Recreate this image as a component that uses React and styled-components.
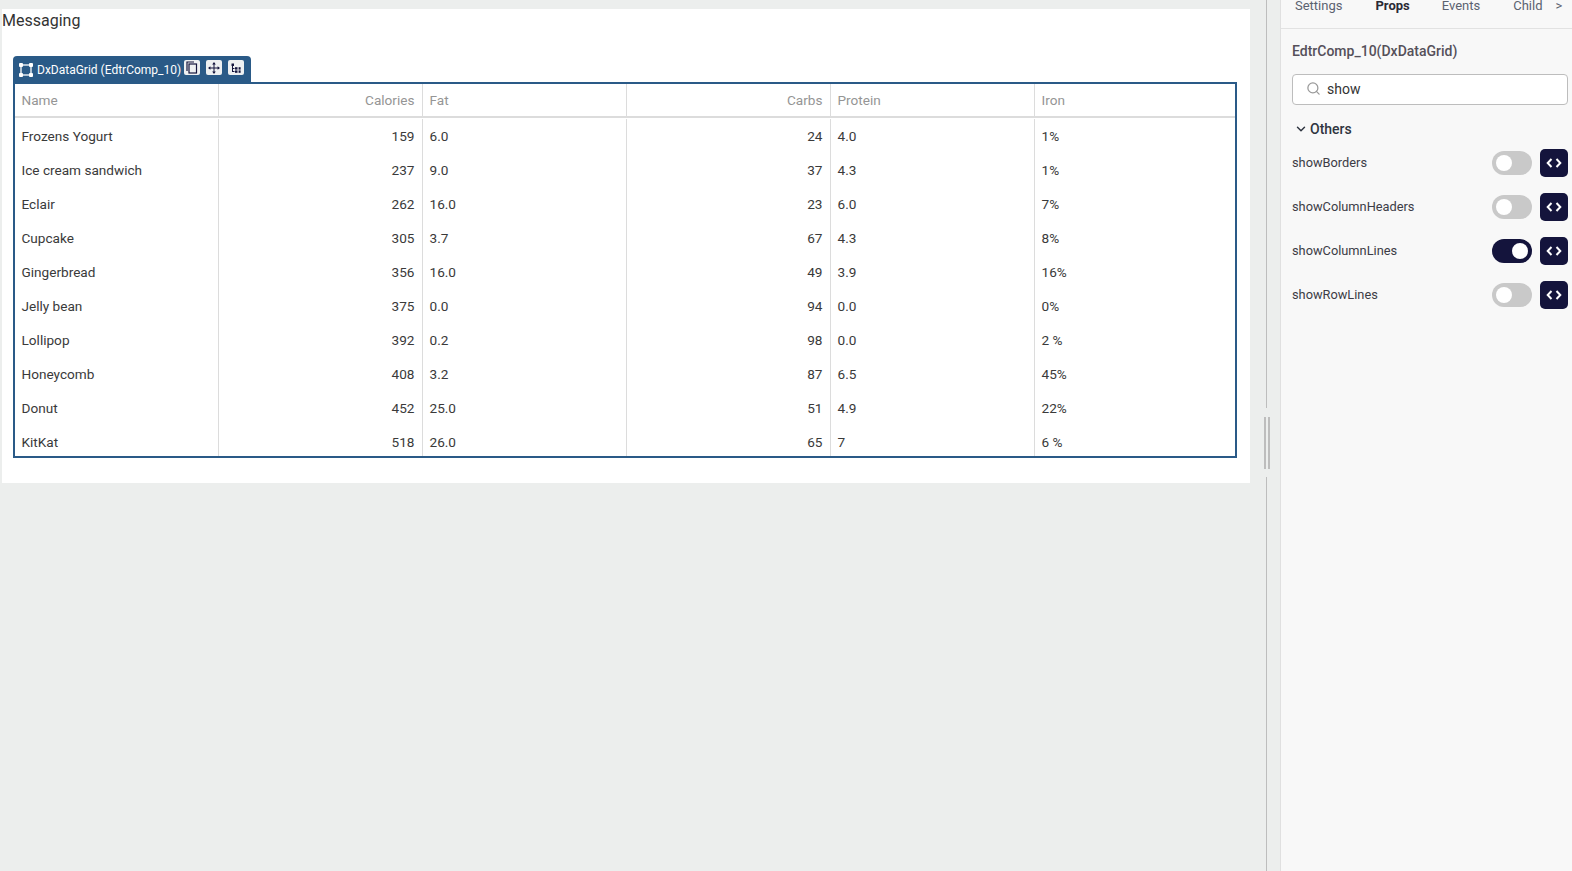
import React from 'react';
import styled, { createGlobalStyle } from 'styled-components';
import { Search, ChevronDown } from 'lucide-react';

const Global = createGlobalStyle`
  html, body { margin: 0; padding: 0; height: 100%; overflow: hidden; }
  body { font-family: Roboto, "Liberation Sans", sans-serif; background: #eceeed; color: #333; }
  * { box-sizing: border-box; }
`;

const Page = styled.div`display: flex; width: 1572px; height: 871px; overflow: hidden; background: #eceeed;`;
const Canvas = styled.main`flex: 0 0 1264px; padding: 9px 14px 0 2px;`;
const Sheet = styled.section`background: #fff; height: 474px; padding: 0 11px 0 0;`;
const Heading = styled.div`font-size: 16px; line-height: 22px; color: #333; padding-top: 1px; height: 47px;`;
const GridFrame = styled.div`margin-left: 11px; position: relative;`;
const GridTab = styled.div`
  display: flex; align-items: center; width: 238px; height: 26px; background: #2a5a87; color: #fff;
  border-radius: 4px 4px 0 0; padding: 2px 0 0 5px; font-size: 12px;
`;
const TabLabel = styled.span`margin-left: 3px; width: 147px; white-space: nowrap;`;
const TabBtn = styled.span`
  width: 16px; height: 15px; background: #eef0f1; border-radius: 2px; margin-right: 6px; display: flex;
  align-items: center; justify-content: center; margin-top: -5px;
`;
const Table = styled.div`
  border: 2px solid #2a5a87; height: 376px; overflow: hidden; width: 1224px;
`;
const Row = styled.div`
  display: grid; grid-template-columns: 204px 204px 204px 204px 204px 200px; height: ${p => p.$h}px;
  border-bottom: ${p => (p.$head ? '2px solid #dcdcdc' : 'none')};
  margin-bottom: ${p => (p.$head ? '1px' : '0')};
`;
const Cell = styled.div`
  font-size: 13.6px; line-height: 20px; padding: 0 7.5px 0 6.5px; display: flex; align-items: center;
  justify-content: ${p => (p.$num ? 'flex-end' : 'flex-start')};
  color: ${p => (p.$head ? '#959595' : '#3a3a3a')};
  border-right: ${p => (p.$last ? 'none' : '1px solid #dcdcdc')};
`;
const Splitter = styled.div`
  flex: 0 0 16px; position: relative;
  background: linear-gradient(#bdbdbd, #bdbdbd) no-repeat 2px 0 / 1px 408px,
    linear-gradient(#bdbdbd, #bdbdbd) no-repeat 2px 477px / 1px 394px;
`;
const Grip = styled.div`
  position: absolute; left: 0; top: 417px; width: 6px; height: 52px;
  border-left: 2px solid #bdbdbd; border-right: 2px solid #bdbdbd;
`;
const Panel = styled.aside`
  flex: 0 0 292px; background: #f8f8f8; border-left: 1px solid #e0e0e0; display: flex; flex-direction: column;
`;
const Tabs = styled.nav`
  height: 29px; border-bottom: 1px solid #e2e2e2; position: relative; flex: none; font-size: 13px; color: #5b6270;
  display: flex; align-items: flex-start; padding-left: 14px; overflow: hidden;
`;
const TabItem = styled.span`
  margin-top: -3px; line-height: 18px; margin-right: ${p => p.$gap}px;
  font-weight: ${p => (p.$active ? 700 : 400)}; color: ${p => (p.$active ? '#2a2a35' : '#5b6270')};
`;
const PanelBody = styled.div`padding: 0 4px 0 11px;`;
const Title = styled.h2`margin: 13px 0 0; font-size: 14px; line-height: 18px; font-weight: 500; color: #55505a;`;
const SearchBox = styled.div`
  margin-top: 14px; height: 31px; border: 1px solid #bdbdbd; border-radius: 4px; background: #fff;
  display: flex; align-items: center; padding: 0 0 2px 13px; color: #333; font-size: 14px; gap: 6px;
  svg { color: #999; }
`;
const Group = styled.div`
  display: flex; align-items: center; margin-top: 14px; height: 20px; font-size: 14px; font-weight: 500; color: #2f3540; padding-left: 2px; gap: 2px;
`;
const PropRow = styled.div`
  display: flex; align-items: center; height: 28px; margin-top: ${p => (p.$first ? 10 : 16)}px; font-size: 12.8px; color: #3c3c46;
`;
const PropName = styled.span`flex: 1; padding-bottom: 2px;`;
const Toggle = styled.span`
  width: 40px; height: 24px; border-radius: 12px; background: ${p => (p.$on ? '#14143c' : '#c9c9c9')};
  display: flex; align-items: center; padding: 0 4px; justify-content: ${p => (p.$on ? 'flex-end' : 'flex-start')};
  &::before { content: ''; width: 16px; height: 16px; border-radius: 50%; background: #fff; }
`;
const CodeBtn = styled.span`
  width: 28px; height: 28px; border-radius: 5px; background: #14143c; margin-left: 8px;
  display: flex; align-items: center; justify-content: center; padding-bottom: 1px;
`;

const rows = [
  ['Frozens Yogurt', '159', '6.0', '24', '4.0', '1%'],
  ['Ice cream sandwich', '237', '9.0', '37', '4.3', '1%'],
  ['Eclair', '262', '16.0', '23', '6.0', '7%'],
  ['Cupcake', '305', '3.7', '67', '4.3', '8%'],
  ['Gingerbread', '356', '16.0', '49', '3.9', '16%'],
  ['Jelly bean', '375', '0.0', '94', '0.0', '0%'],
  ['Lollipop', '392', '0.2', '98', '0.0', '2 %'],
  ['Honeycomb', '408', '3.2', '87', '6.5', '45%'],
  ['Donut', '452', '25.0', '51', '4.9', '22%'],
  ['KitKat', '518', '26.0', '65', '7', '6 %'],
];
const head = ['Name', 'Calories', 'Fat', 'Carbs', 'Protein', 'Iron'];
const numeric = [false, true, false, true, false, false];

const Resize = () => (
  <svg width="16" height="16" viewBox="0 0 16 16" fill="none" stroke="#fff" strokeWidth="1.3">
    <rect x="3" y="3" width="10" height="10" />
    <g fill="#fff" stroke="none">
      <rect x="1" y="1" width="4" height="4" rx="1" /><rect x="11" y="1" width="4" height="4" rx="1" />
      <rect x="1" y="11" width="4" height="4" rx="1" /><rect x="11" y="11" width="4" height="4" rx="1" />
    </g>
  </svg>
);
const CopyIcon = () => (
  <svg width="12" height="13" viewBox="0 0 12 13" fill="none" stroke="#14143c" strokeWidth="1.2">
    <path d="M1 10V1h7" /><rect x="3" y="3" width="7.5" height="9" />
  </svg>
);
const MoveIcon = () => (
  <svg width="12" height="12" viewBox="0 0 12 12" fill="#14143c" stroke="#14143c" strokeWidth="1">
    <path d="M6 1V11M1 6H11" fill="none" />
    <path d="M6 0 4.2 2.4h3.6zM6 12 4.2 9.6h3.6zM0 6 2.4 4.2v3.6zM12 6 9.6 4.2v3.6z" stroke="none" />
  </svg>
);
const TreeIcon = () => (
  <svg width="12" height="12" viewBox="0 0 12 12" fill="#14143c">
    <rect x="1.5" y="1.5" width="2.5" height="2.5" /><rect x="2" y="4" width="1" height="6" />
    <rect x="2" y="6" width="2.5" height="1" /><rect x="2" y="9" width="2.5" height="1" />
    <rect x="5" y="5.2" width="2.5" height="2.4" /><rect x="5" y="8.4" width="2.5" height="2.4" />
    <rect x="8.6" y="5.2" width="2" height="2.4" /><rect x="8.6" y="8.4" width="2" height="2.4" />
  </svg>
);
const CodeIcon = () => (
  <svg width="16" height="10" viewBox="0 0 16 10" fill="none" stroke="#fff" strokeWidth="2">
    <path d="M5.5 1 1.7 5l3.8 4M10.5 1l3.8 4-3.8 4" />
  </svg>
);

const props = [['showBorders', false], ['showColumnHeaders', false], ['showColumnLines', true], ['showRowLines', false]];

export default function App() {
  return (
    <Page>
      <Global />
      <Canvas>
        <Sheet>
          <Heading>Messaging</Heading>
          <GridFrame>
            <GridTab>
              <Resize />
              <TabLabel>DxDataGrid (EdtrComp_10)</TabLabel>
              <TabBtn><CopyIcon /></TabBtn>
              <TabBtn><MoveIcon /></TabBtn>
              <TabBtn><TreeIcon /></TabBtn>
            </GridTab>
            <Table>
              <Row $head $h={34}>
                {head.map((h, i) => <Cell key={h} $head $num={numeric[i]} $last={i === 5}>{h}</Cell>)}
              </Row>
              {rows.map(r => (
                <Row key={r[0]} $h={34}>
                  {r.map((c, i) => <Cell key={i} $num={numeric[i]} $last={i === 5}>{c}</Cell>)}
                </Row>
              ))}
            </Table>
          </GridFrame>
        </Sheet>
      </Canvas>
      <Splitter><Grip /></Splitter>
      <Panel>
        <Tabs>
          <TabItem $gap={33}>Settings</TabItem>
          <TabItem $gap={32} $active>Props</TabItem>
          <TabItem $gap={33}>Events</TabItem>
          <TabItem $gap={13}>Child</TabItem>
          <TabItem $gap={0}>&gt;</TabItem>
        </Tabs>
        <PanelBody>
          <Title>EdtrComp_10(DxDataGrid)</Title>
          <SearchBox><Search size={15} strokeWidth={2} />show</SearchBox>
          <Group><ChevronDown size={14} strokeWidth={2.5} />Others</Group>
          {props.map(([name, on], i) => (
            <PropRow key={name} $first={i === 0}>
              <PropName>{name}</PropName>
              <Toggle $on={on} />
              <CodeBtn><CodeIcon /></CodeBtn>
            </PropRow>
          ))}
        </PanelBody>
      </Panel>
    </Page>
  );
}
